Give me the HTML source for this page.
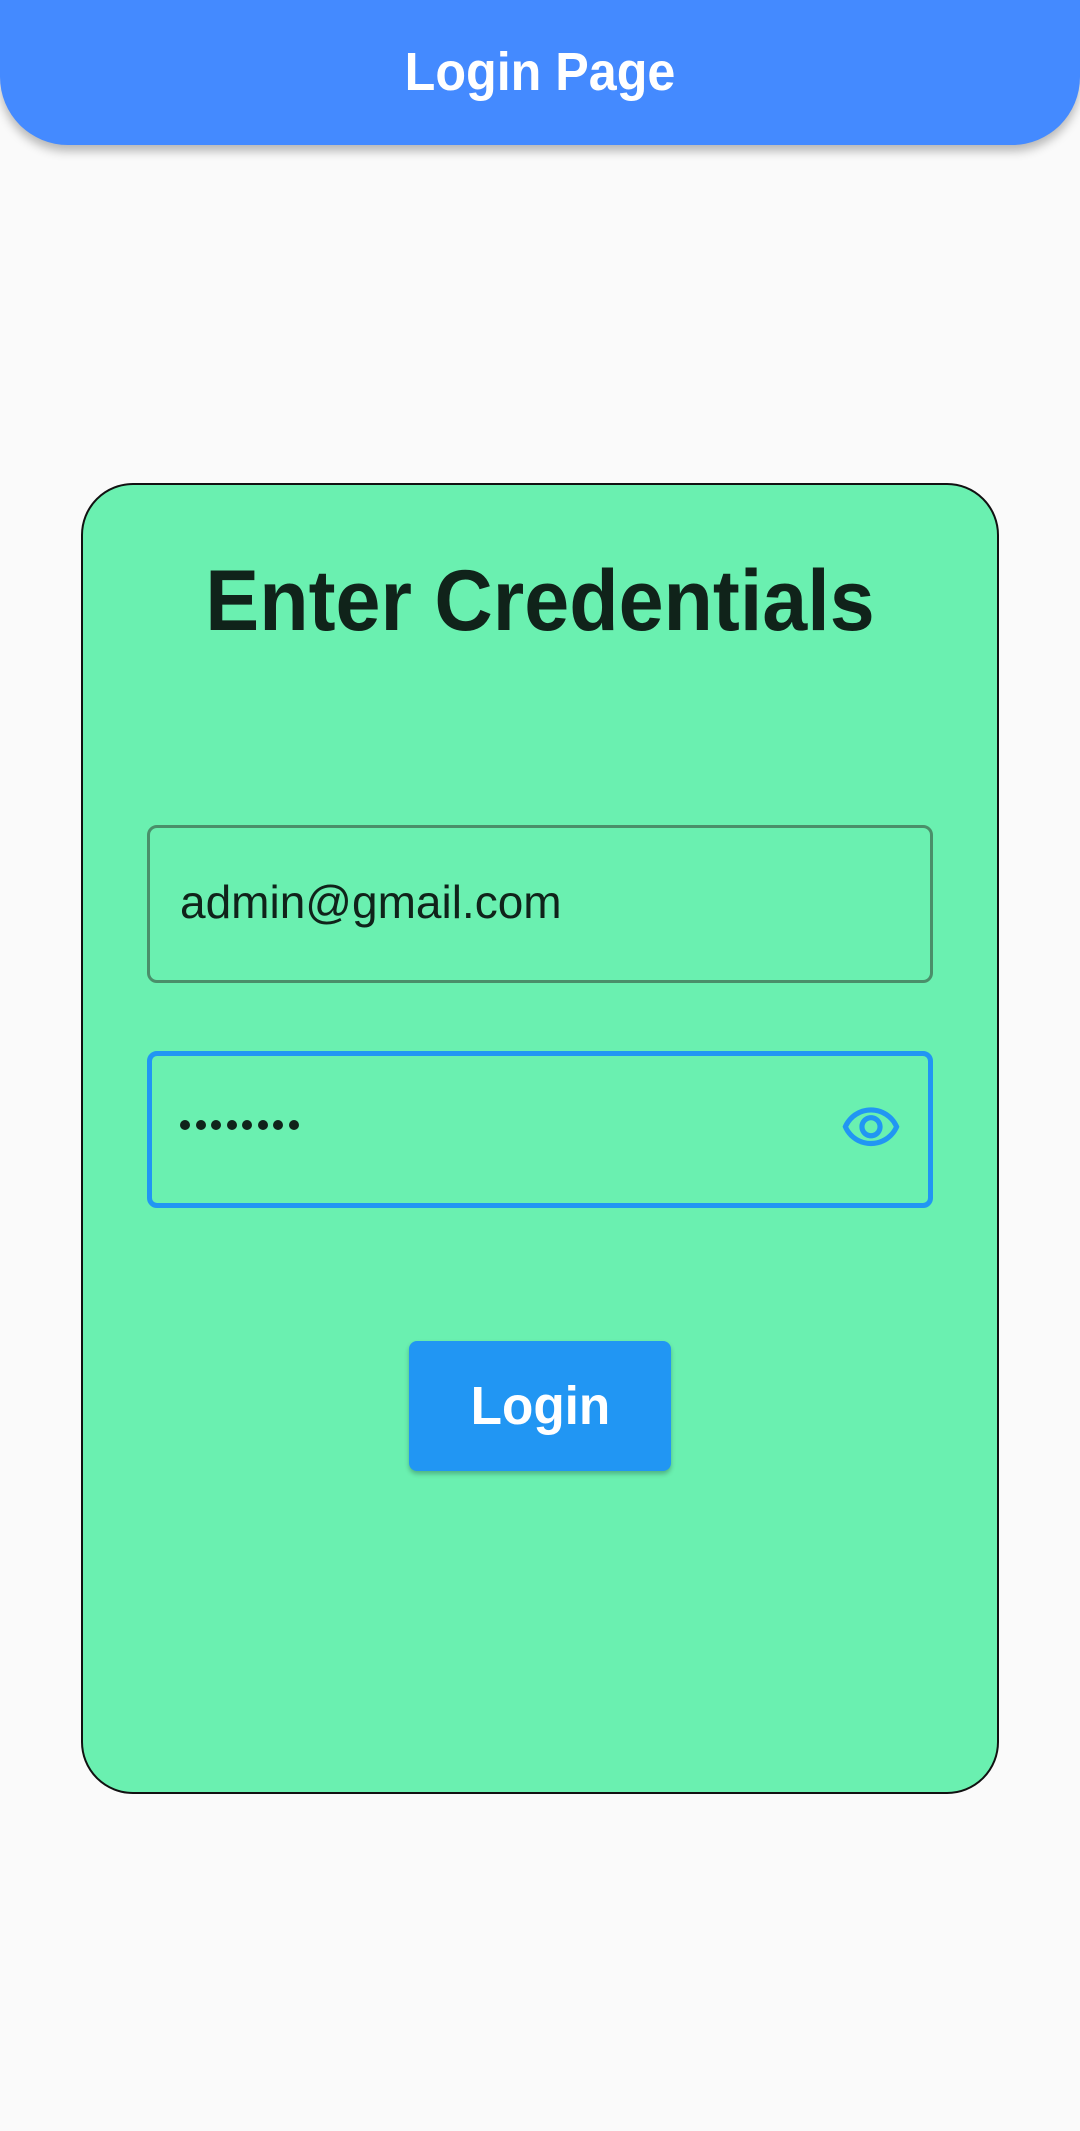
<!DOCTYPE html>
<html><head><meta charset="utf-8"><style>
*{margin:0;padding:0;box-sizing:border-box}
body{width:1080px;height:2131px;background:#fafafa;font-family:"Liberation Sans",sans-serif;position:relative;overflow:hidden}
.bar{position:absolute;left:0;top:0;width:1080px;height:145px;background:#448aff;border-radius:0 0 68px 68px;box-shadow:0 6px 10px rgba(0,0,0,.28)}
.bar span{position:absolute;left:0;right:0;top:42px;text-align:center;color:#fff;font-size:54px;line-height:60px;font-weight:bold;transform:scaleX(0.93)}
.card{position:absolute;left:81px;top:483px;width:918px;height:1311px;background:#6af0b0;border:2px solid #111;border-radius:52px}
.h{position:absolute;left:0;right:0;top:556px;text-align:center;font-size:86px;font-weight:bold;color:#10231a;line-height:90px;transform:scaleX(0.94)}
.f1{position:absolute;left:147px;top:825px;width:786px;height:158px;border:3px solid #4a8f6a;border-radius:10px}
.t1{position:absolute;left:180px;top:877px;font-size:46px;color:#10231a;line-height:50px}
.f2{position:absolute;left:147px;top:1051px;width:786px;height:157px;border:5px solid #2196f3;border-radius:10px}
.dot{position:absolute;top:1120px;width:10px;height:10px;border-radius:50%;background:#10231a}
.eye{position:absolute;left:840px;top:1097px}
.btn{position:absolute;left:409px;top:1341px;width:262px;height:130px;background:#2196f3;border-radius:8px;box-shadow:0 3px 5px rgba(0,0,0,.25);color:#fff;text-align:center;font-size:54px;line-height:130px;font-weight:bold}
.btn span{display:inline-block;transform:scaleX(0.95)}
</style></head><body>
<div class="bar"><span>Login Page</span></div>
<div class="card"></div>
<div class="h">Enter Credentials</div>
<div class="f1"></div>
<div class="t1">admin@gmail.com</div>
<div class="f2"></div>
<div class="dot" style="left:180px"></div><div class="dot" style="left:195.5px"></div><div class="dot" style="left:211px"></div><div class="dot" style="left:226.5px"></div><div class="dot" style="left:242px"></div><div class="dot" style="left:257.5px"></div><div class="dot" style="left:273px"></div><div class="dot" style="left:288.5px"></div>
<svg class="eye" width="62" height="62" viewBox="0 0 24 24"><path fill="#2196f3" d="M12 6a9.770 9.770 0 0 1 8.820 5.500C19.170 14.870 15.790 17 12 17s-7.170-2.130-8.820-5.500A9.770 9.770 0 0 1 12 6m0-2C7 4 2.730 7.110 1 11.500 2.730 15.890 7 19 12 19s9.270-3.110 11-7.500C21.270 7.110 17 4 12 4zm0 5a2.500 2.500 0 0 1 0 5 2.500 2.500 0 0 1 0-5m0-2c-2.480 0-4.500 2.020-4.500 4.500S9.520 16 12 16s4.500-2.020 4.500-4.500S14.480 7 12 7z"/></svg>
<div class="btn"><span>Login</span></div>
</body></html>
